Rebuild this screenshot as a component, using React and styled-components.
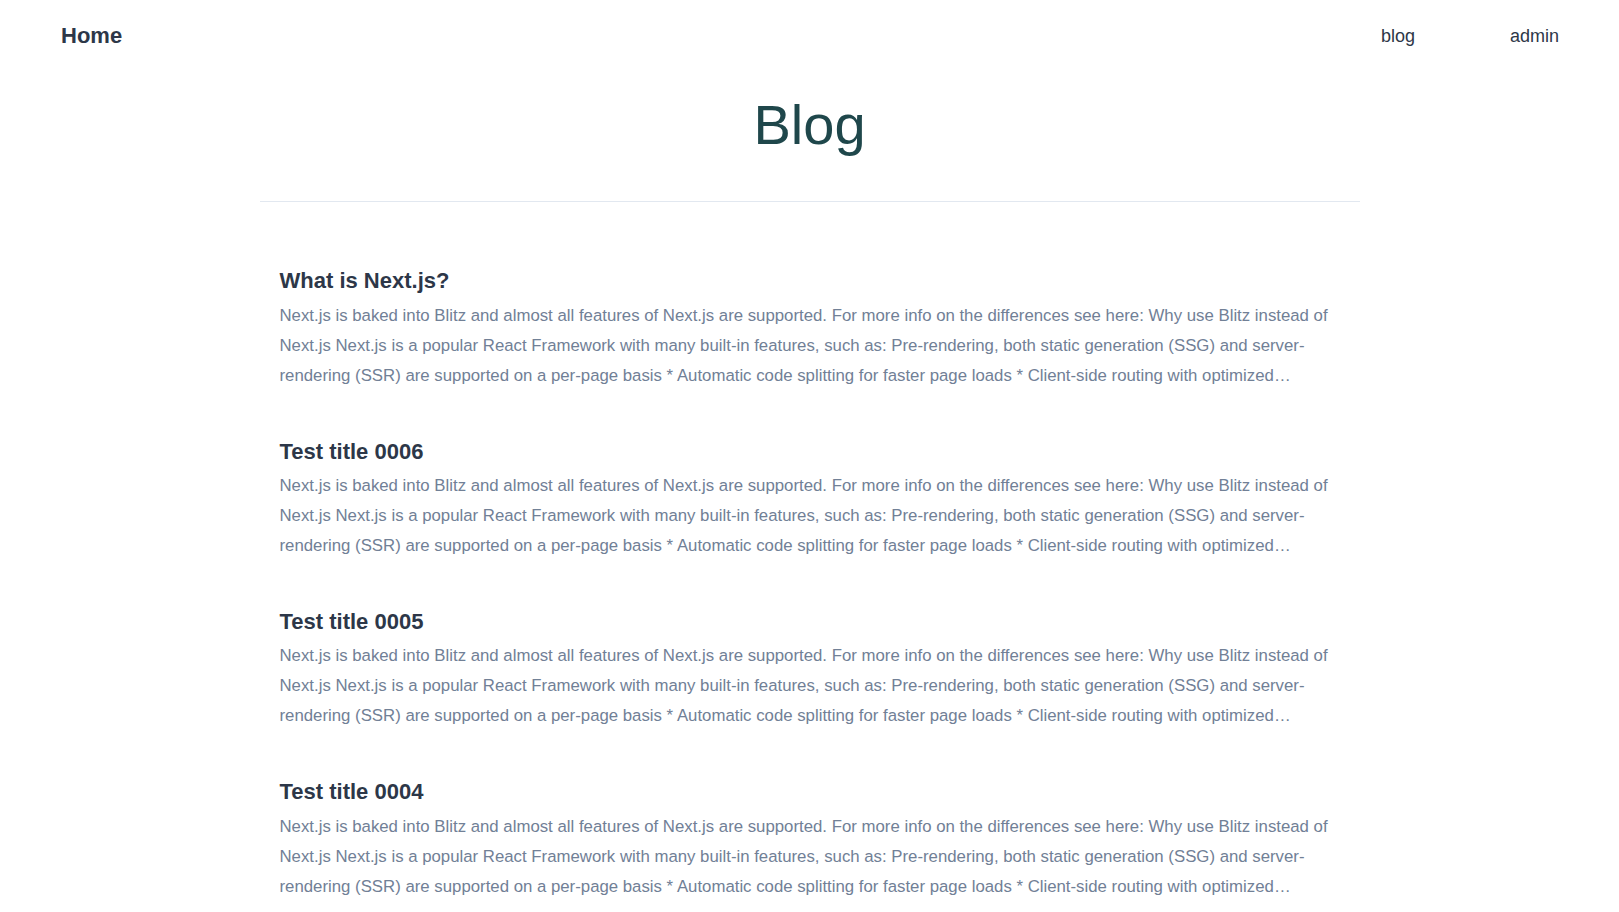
import React from "react";
import styled, { createGlobalStyle } from "styled-components";

const GlobalStyle = createGlobalStyle`
  * {
    box-sizing: border-box;
  }
  body {
    margin: 0;
    background: #ffffff;
    font-family: "Liberation Sans", Arial, sans-serif;
    color: #2d3748;
  }
`;

const Header = styled.header`
  display: flex;
  align-items: center;
  justify-content: space-between;
  height: 73px;
  padding: 0 60px 0 61px;
`;

const Brand = styled.a`
  font-size: 22px;
  line-height: 1.2;
  font-weight: 700;
  color: #2d3748;
  text-decoration: none;
`;

const Nav = styled.nav`
  display: flex;
  align-items: center;
  gap: 95px;
`;

const NavLink = styled.a`
  font-size: 18px;
  line-height: 1.2;
  font-weight: 500;
  color: #2d3748;
  text-decoration: none;
`;

const Main = styled.main`
  max-width: 1100px;
  margin: 0 auto;
`;

const PageTitle = styled.h1`
  margin: 18px 0 0;
  padding-bottom: 43px;
  border-bottom: 1px solid #e2e8f0;
  text-align: center;
  font-size: 56px;
  line-height: 1.2;
  font-weight: 400;
  color: #1f474b;
`;

const PostList = styled.ul`
  list-style: none;
  margin: 0;
  padding: 66px 20px 40px;
  display: flex;
  flex-direction: column;
  gap: 48px;
`;

const Post = styled.li`
  display: flex;
  flex-direction: column;
  gap: 6px;
`;

const PostTitle = styled.h2`
  margin: 0;
  font-size: 22px;
  line-height: 1.2;
  font-weight: 700;
  color: #2d3748;
`;

const Excerpt = styled.p`
  margin: 0;
  font-size: 16.8px;
  line-height: 30px;
  color: #718096;
  display: -webkit-box;
  -webkit-line-clamp: 3;
  -webkit-box-orient: vertical;
  overflow: hidden;
`;

const excerpt =
  "Next.js is baked into Blitz and almost all features of Next.js are supported. For more info on the differences see here: Why use Blitz instead of Next.js Next.js is a popular React Framework with many built-in features, such as: Pre-rendering, both static generation (SSG) and server-rendering (SSR) are supported on a per-page basis * Automatic code splitting for faster page loads * Client-side routing with optimized prefetching * Built-in CSS and Sass support, and support for any CSS-in-JS library";

const posts = ["What is Next.js?", "Test title 0006", "Test title 0005", "Test title 0004"];

const App = () => (
  <>
    <GlobalStyle />
    <Header>
      <Brand href="#">Home</Brand>
      <Nav>
        <NavLink href="#">blog</NavLink>
        <NavLink href="#">admin</NavLink>
      </Nav>
    </Header>
    <Main>
      <PageTitle>Blog</PageTitle>
      <PostList>
        {posts.map((title) => (
          <Post key={title}>
            <PostTitle>{title}</PostTitle>
            <Excerpt>{excerpt}</Excerpt>
          </Post>
        ))}
      </PostList>
    </Main>
  </>
);

export default App;
